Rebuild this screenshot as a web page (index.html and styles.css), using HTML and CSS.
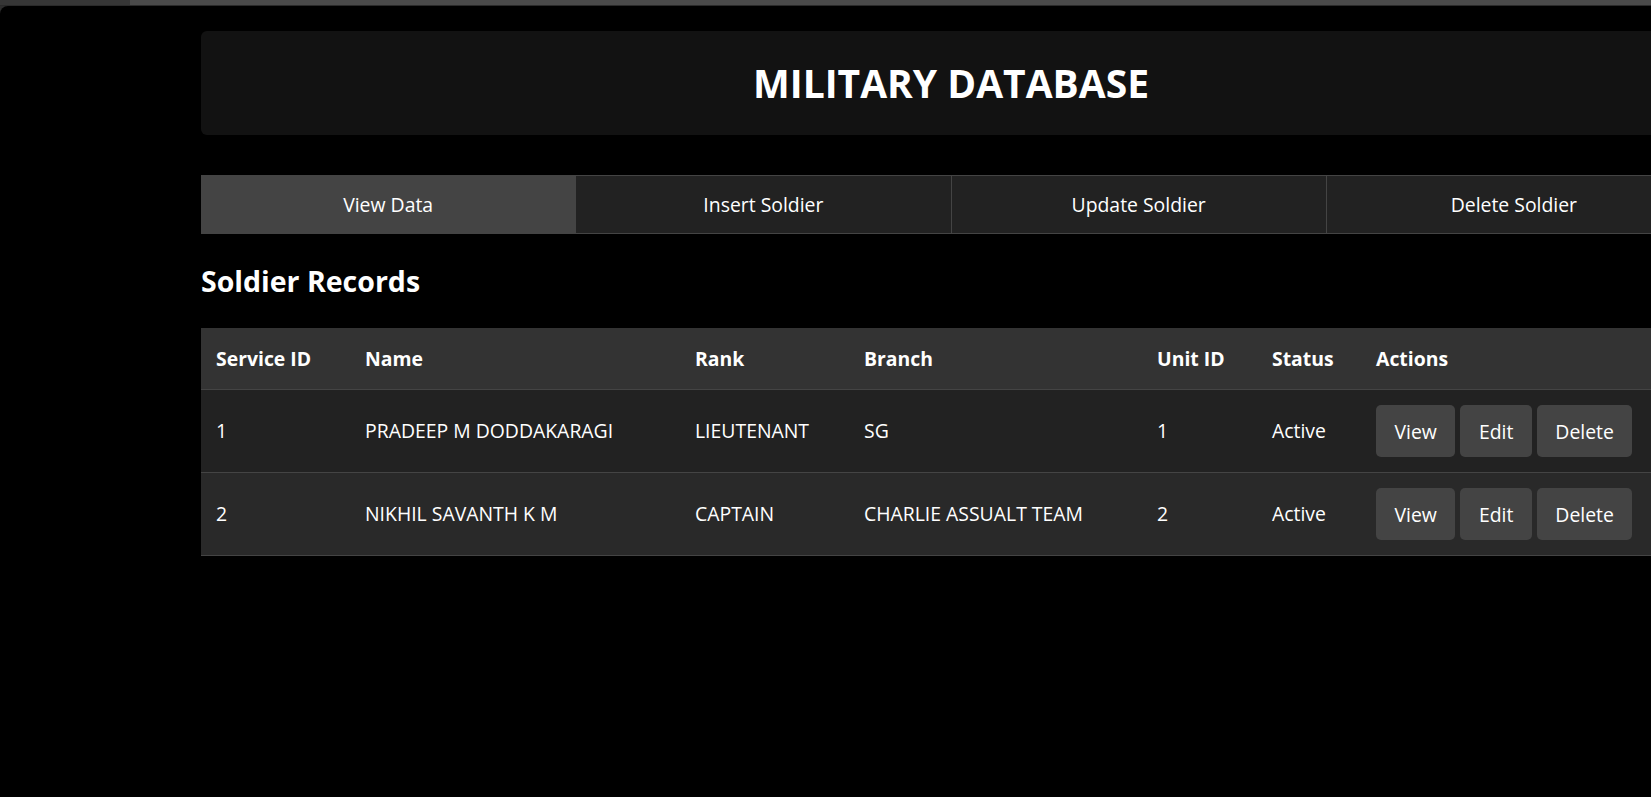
FILE: index.html
```html
<!DOCTYPE html>
<html lang="en">
<head>
<meta charset="utf-8">
<title>Military Database</title>
<link rel="stylesheet" href="styles.css">
</head>
<body>
<div class="chrome">
  <div class="chrome-left"></div>
  <div class="chrome-right"></div>
</div>
<div class="window">
  <div class="container">
    <header class="header">
      <h1 class="title">MILITARY DATABASE</h1>
    </header>
    <nav class="tabs">
      <div class="tab active">View Data</div>
      <div class="tab">Insert Soldier</div>
      <div class="tab">Update Soldier</div>
      <div class="tab">Delete Soldier</div>
    </nav>
    <h2 class="section-title">Soldier Records</h2>
    <table class="records">
      <colgroup>
        <col class="c-id"><col class="c-name"><col class="c-rank"><col class="c-branch"><col class="c-unit"><col class="c-status"><col class="c-actions">
      </colgroup>
      <thead>
        <tr>
          <th>Service ID</th><th>Name</th><th>Rank</th><th>Branch</th><th>Unit ID</th><th>Status</th><th>Actions</th>
        </tr>
      </thead>
      <tbody>
        <tr class="row-odd">
          <td>1</td><td>PRADEEP M DODDAKARAGI</td><td>LIEUTENANT</td><td>SG</td><td>1</td><td>Active</td>
          <td><div class="actions"><button class="btn">View</button><button class="btn">Edit</button><button class="btn">Delete</button></div></td>
        </tr>
        <tr class="row-even">
          <td>2</td><td>NIKHIL SAVANTH K M</td><td>CAPTAIN</td><td>CHARLIE ASSUALT TEAM</td><td>2</td><td>Active</td>
          <td><div class="actions"><button class="btn">View</button><button class="btn">Edit</button><button class="btn">Delete</button></div></td>
        </tr>
      </tbody>
    </table>
  </div>
</div>
</body>
</html>
```
FILE: styles.css
```css
html, body {
  margin: 0;
  padding: 0;
  overflow: hidden;
  height: 100%;
}
body {
  background: #2e2e2e;
  font-family: "Open Sans", "Noto Sans", sans-serif;
  color: #fff;
  font-size: 19.4px;
}
.chrome {
  display: flex;
  height: 5px;
  border-bottom: 1px solid #2a2a2a;
}
.chrome-left {
  width: 130px;
  background: #363636;
}
.chrome-right {
  flex: 1;
  background: #4a4a4a;
}
.window {
  background: #000;
  border-top-left-radius: 8px;
  height: calc(100% - 6px);
}
.container {
  width: 1500px;
  padding: 25px 0 0 201px;
}
.header {
  background: #121212;
  border-radius: 6px;
  padding: 25px;
  text-align: center;
}
.title {
  margin: 0;
  font-size: 39px;
  line-height: 54px;
  font-weight: 700;
  letter-spacing: 0;
}
.tabs {
  display: flex;
  margin-top: 40px;
  border-top: 1px solid #444;
  border-bottom: 1px solid #444;
  background: #222;
}
.tab {
  flex: 1;
  text-align: center;
  padding: 15px 0 15px;
  line-height: 27px;
  border-right: 1px solid #444;
}
.tab:last-child {
  border-right: none;
}
.tab.active {
  background: #444;
}
.section-title {
  margin: 26px 0 26px;
  font-size: 28.5px;
  line-height: 42px;
  font-weight: 700;
}
.records {
  width: 1500px;
  table-layout: fixed;
  border-collapse: collapse;
}
.c-id { width: 149px; }
.c-name { width: 330px; }
.c-rank { width: 169px; }
.c-branch { width: 293px; }
.c-unit { width: 115px; }
.c-status { width: 104px; }
.c-actions { width: 340px; }
.records th {
  background: #333;
  text-align: left;
  font-weight: 700;
  padding: 18px 15px 17px;
  line-height: 26px;
  border-bottom: 1px solid #444;
  white-space: nowrap;
}
.records td {
  padding: 15px;
  line-height: 26px;
  border-bottom: 1px solid #444;
  vertical-align: middle;
  white-space: nowrap;
}
.row-odd td { background: #222; }
.row-even td { background: #292929; }
.actions {
  display: flex;
  gap: 5px;
}
.btn {
  font-family: inherit;
  font-size: 19.4px;
  line-height: 26px;
  color: #fff;
  background: #444;
  border: none;
  border-radius: 5px;
  padding: 14px 18.5px 12px;
  height: 52px;
}
```
